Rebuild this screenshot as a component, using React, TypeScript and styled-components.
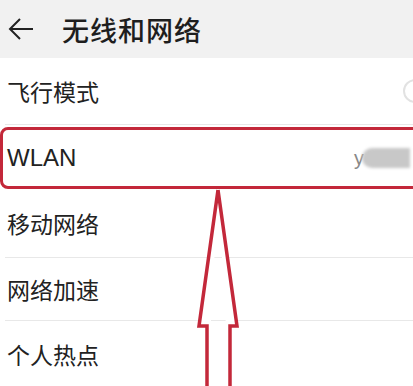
import React from "react"
import styled, { createGlobalStyle } from "styled-components"

const red = "#c3283a"

const Global = createGlobalStyle`
  html, body {
    margin: 0;
    padding: 0;
    background: #fff;
    overflow: hidden;
  }
  body {
    font-family: "Noto Sans CJK SC", "Noto Sans", sans-serif;
    color: #222;
  }
`

const Page = styled.div`
  position: relative;
  width: 413px;
  height: 386px;
  overflow: hidden;
  background: #fff;
`

const Header = styled.header`
  height: 58px;
  background: #f1f1f1;
  display: flex;
  align-items: center;
  padding-left: 7px;
  gap: 27px;
`

const Title = styled.h1`
  margin: 0;
  font-size: 27px;
  font-weight: 500;
  color: #1e1e1e;
  letter-spacing: 1px;
`

const List = styled.div`
  display: flex;
  flex-direction: column;
`

const Row = styled.div<{ $h: number; $divider?: boolean }>`
  height: ${p => p.$h}px;
  box-sizing: border-box;
  display: flex;
  align-items: center;
  justify-content: space-between;
  margin-left: 5px;
  padding-left: 2px;
  border-bottom: ${p => (p.$divider ? "1px solid #e8e8e8" : "none")};
`

const Highlight = styled.div`
  height: 62px;
  margin-top: 2px;
  margin-right: -12px;
  box-sizing: border-box;
  border: 3px solid ${red};
  border-radius: 8px;
  display: flex;
  align-items: center;
  justify-content: space-between;
  padding-left: 4px;
  padding-right: 12px;
`

const Label = styled.span`
  font-size: 23px;
  color: #222;
`

const Latin = styled(Label)`
  font-family: "Liberation Sans", Arial, sans-serif;
  font-size: 24px;
`

const Value = styled.span`
  display: flex;
  align-items: center;
  font-family: "Liberation Sans", Arial, sans-serif;
  font-size: 20px;
  color: #888;
`

const Blur = styled.span`
  display: block;
  width: 48px;
  height: 20px;
  margin-left: -2px;
  border-radius: 10px 0 0 10px;
  background: #c8c8c8;
  filter: blur(1.5px);
`

const Knob = styled.span`
  display: block;
  width: 24px;
  height: 24px;
  margin-right: -14px;
  border-radius: 50%;
  border: 2px solid #e2e2e2;
  box-sizing: border-box;
`

const ArrowOverlay = styled.svg`
  position: absolute;
  left: 190px;
  top: 186px;
  pointer-events: none;
`

const BackIcon = () => (
  <svg width="28" height="24" viewBox="0 0 28 24">
    <path d="M26 12H3M13 2L3 12l10 10" fill="none" stroke="#222" strokeWidth="2" />
  </svg>
)

export default function App() {
  return (
    <Page>
      <Global />
      <Header>
        <BackIcon />
        <Title>无线和网络</Title>
      </Header>
      <List>
        <Row $h={67} $divider>
          <Label>飞行模式</Label>
          <Knob />
        </Row>
        <Highlight>
          <Latin>WLAN</Latin>
          <Value>
            y<Blur />
          </Value>
        </Highlight>
        <Row $h={69} $divider>
          <Label>移动网络</Label>
        </Row>
        <Row $h={63} $divider>
          <Label>网络加速</Label>
        </Row>
        <Row $h={66}>
          <Label>个人热点</Label>
        </Row>
      </List>
      <ArrowOverlay width="60" height="210" viewBox="0 0 60 210">
        <path
          d="M28 4 L47 140 L40 140 L40 210 M17 210 L17 140 L9 140 L28 4"
          fill="#fff"
          stroke={red}
          strokeWidth="3.5"
          strokeLinejoin="miter"
        />
      </ArrowOverlay>
    </Page>
  )
}
